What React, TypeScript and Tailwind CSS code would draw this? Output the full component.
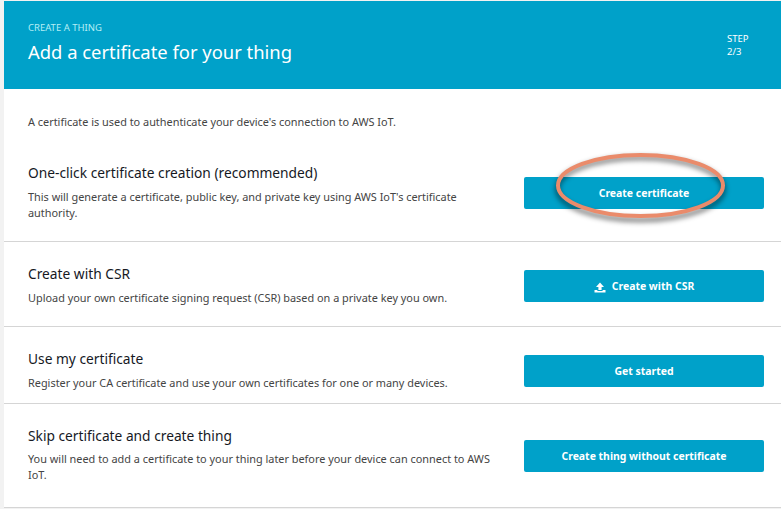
import type { ReactNode } from "react";

function UploadIcon() {
    return (
        <svg width="12" height="11" viewBox="0 0 12 11" fill="currentColor" className="mr-[6px]">
            <path d="M6 0.5 10 5H7.6V8H4.4V5H2Z" />
            <path d="M0.5 8H3.4V9H8.6V8H11.5V10.5H0.5Z" />
        </svg>
    );
}

function Row({
    title,
    desc,
    button,
    icon,
    className,
    textClass,
    buttonClass,
    gapClass = "mt-[6px]",
}: {
    title: string;
    desc: ReactNode;
    button: string;
    icon?: ReactNode;
    className: string;
    textClass: string;
    buttonClass: string;
    gapClass?: string;
}) {
    return (
        <div className={`flex items-start border-b border-[#d5d5d5] pl-6 pr-[17px] ${className}`}>
            <div className={`w-[472px] shrink-0 ${textClass}`}>
                <h3 className="text-[13.75px] leading-[20px] text-[#16191f]">{title}</h3>
                <p className={`text-[10.9px] leading-[16px] text-[#444] ${gapClass}`}>{desc}</p>
            </div>
            <button
                className={`ml-auto flex h-[32px] w-[240px] items-center justify-center rounded-[2px] bg-[#00a1c9] pt-[2px] text-[10.45px] font-bold text-white ${buttonClass}`}
            >
                {icon}
                {button}
            </button>
        </div>
    );
}

export default function App() {
    return (
        <div className="relative h-[509px] w-[781px] overflow-hidden bg-[#f2f2f2] pt-px pl-1 font-['Noto_Sans',sans-serif]">
            <div className="flex h-[88px] items-start justify-between bg-[#00a1c9] pl-6 pr-[17px] pt-[21px] text-white">
                <div>
                    <div className="text-[9.5px] leading-[12px] text-[#b5eef5]">CREATE A THING</div>
                    <h1 className="mt-[5px] text-[18.4px] leading-[26px] text-white">Add a certificate for your thing</h1>
                </div>
                <div className="mt-[11px] mr-[13px] w-[24px] text-[9.5px] leading-[12.5px]">
                    STEP
                    <br />
                    2/3
                </div>
            </div>

            <div className="bg-white">
                <p className="pl-6 pt-[25px] text-[10.9px] leading-[16px] text-[#444]">
                    A certificate is used to authenticate your device's connection to AWS IoT.
                </p>
                <Row
                    className="h-[112px]"
                    textClass="mt-[33px]"
                    buttonClass="mt-[47px]"
                    title="One-click certificate creation (recommended)"
                    desc={
                        <>
                            This will generate a certificate, public key, and private key using AWS IoT's certificate
                            <br />
                            authority.
                        </>
                    }
                    button="Create certificate"
                />
                <Row
                    className="h-[85px]"
                    textClass="mt-[22px]"
                    buttonClass="mt-[28px]"
                    title="Create with CSR"
                    desc="Upload your own certificate signing request (CSR) based on a private key you own."
                    button="Create with CSR"
                    icon={<UploadIcon />}
                />
                <Row
                    className="h-[77px]"
                    textClass="mt-[22px]"
                    buttonClass="mt-[28px]"
                    title="Use my certificate"
                    desc="Register your CA certificate and use your own certificates for one or many devices."
                    button="Get started"
                />
                <Row
                    className="h-[104px]"
                    textClass="mt-[22px]"
                    buttonClass="mt-[36px]"
                    gapClass="mt-[5px]"
                    title="Skip certificate and create thing"
                    desc={
                        <>
                            You will need to add a certificate to your thing later before your device can connect to AWS
                            <br />
                            IoT.
                        </>
                    }
                    button="Create thing without certificate"
                />
            </div>

            {/* hand drawn callout round the first button */}
            <svg className="absolute left-[546px] top-[143px]" width="190" height="90" viewBox="0 0 190 90" fill="none">
                <ellipse cx="94.5" cy="46" rx="83" ry="31" stroke="#000" strokeOpacity="0.45" strokeWidth="5" style={{ filter: "blur(2.5px)" }} />
                <ellipse cx="94.5" cy="42.5" rx="82.5" ry="30.5" stroke="#ea8b6b" strokeWidth="4" />
            </svg>
        </div>
    );
}
